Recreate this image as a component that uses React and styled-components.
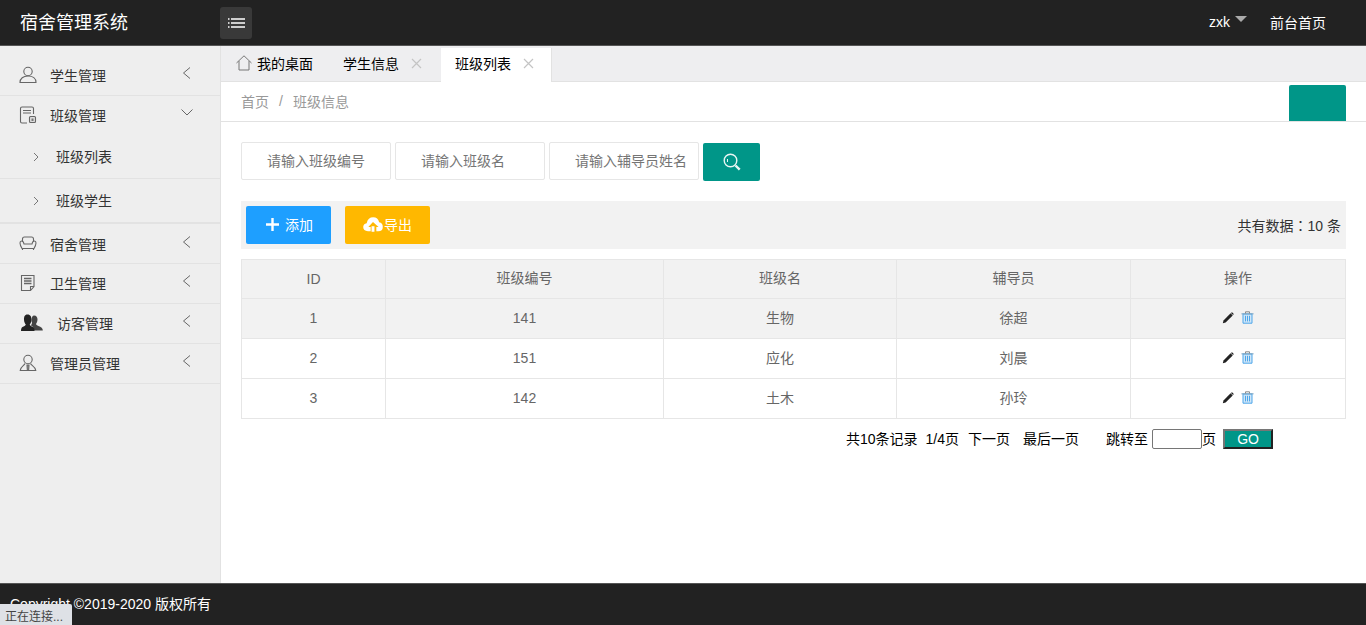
import React from "react";
import styled, { createGlobalStyle } from "styled-components";

const GlobalStyle = createGlobalStyle`
  html, body {
    margin: 0;
    padding: 0;
    height: 100%;
    overflow: hidden;
    font-family: "Liberation Sans", "Noto Sans CJK SC", sans-serif;
    font-size: 14px;
    color: #333;
  }
  * {
    box-sizing: border-box;
  }
`;

const Page = styled.div`
  position: relative;
  display: flex;
  flex-direction: column;
  height: 625px;
  width: 1366px;
  overflow: hidden;
`;

const Header = styled.header`
  flex: 0 0 46px;
  display: flex;
  align-items: center;
  background: #222;
  border-bottom: 1px solid #555;
  color: #fff;
`;

const Logo = styled.div`
  width: 220px;
  padding: 0 0 3px 20px;
  font-size: 18px;
`;

const MenuToggle = styled.button`
  width: 32px;
  height: 32px;
  margin-top: 1px;
  padding: 0;
  border: 0;
  border-radius: 3px;
  background: #393939;
  display: flex;
  align-items: center;
  justify-content: center;
`;

const HeaderRight = styled.div`
  margin-left: auto;
  display: flex;
  align-items: center;
  padding: 0 40px 2px 0;
  font-size: 14px;
`;

const UserName = styled.span`
  margin-right: 5px;
`;

const Caret = styled.span`
  width: 0;
  height: 0;
  margin: 0 23px 5px 0;
  border-style: solid;
  border-width: 6px 6px 0;
  border-color: #aaa transparent transparent;
`;

const Body = styled.div`
  flex: 1;
  display: flex;
  min-height: 0;
`;

const Sidebar = styled.aside`
  flex: 0 0 221px;
  background: #eee;
  border-right: 1px solid #e2e2e2;
`;

const NavRow = styled.div`
  display: flex;
  align-items: center;
  height: ${(p) => p.$h}px;
  padding: ${(p) => p.$pt || 0}px 0 ${(p) => p.$pb || 0}px ${(p) => (p.$sub ? 28 : 19)}px;
  border-bottom: ${(p) => (p.$line === "none" ? "0" : `${p.$line || 1}px solid #e2e2e2`)};
  color: #333;
  font-size: 14px;
`;

const NavIcon = styled.span`
  width: ${(p) => p.$w || 31}px;
  height: 18px;
  display: flex;
  align-items: center;
  margin-top: -2px;
`;

const NavLabel = styled.span`
  flex: 1;
  line-height: 20px;
`;

const NavArrow = styled.span`
  width: 16px;
  height: 16px;
  margin: -6px 25px 0 0;
  display: flex;
`;

const SubArrow = styled.span`
  width: 28px;
  display: flex;
`;

const Main = styled.main`
  flex: 1;
  min-width: 0;
  background: #fff;
  display: flex;
  flex-direction: column;
`;

const TabBar = styled.div`
  flex: 0 0 36px;
  display: flex;
  align-items: flex-end;
  background: #eeeef0;
  border-bottom: 1px solid #e2e2e2;
`;

const Tab = styled.div`
  height: 34px;
  margin-bottom: -1px;
  display: flex;
  align-items: center;
  padding: 0 ${(p) => p.$pr}px 4px ${(p) => p.$pl}px;
  width: ${(p) => p.$w}px;
  color: #000;
  font-size: 14px;
  background: ${(p) => (p.$active ? "#fff" : "transparent")};
  border-right: ${(p) => (p.$active ? "1px solid #e2e2e2" : "0")};
`;

const TabText = styled.span`
  flex: 1;
  white-space: nowrap;
`;

const HomeIcon = styled.span`
  display: flex;
  margin: -1px 5px 0 0;
`;

const Crumbs = styled.div`
  flex: 0 0 40px;
  display: flex;
  align-items: center;
  padding: 0 0 2px 20px;
  border-bottom: 1px solid #e2e2e2;
  color: #999;
  font-size: 14px;
`;

const CrumbSep = styled.span`
  margin: 0 10px;
`;

const RefreshButton = styled.div`
  align-self: flex-end;
  width: 57px;
  height: 36px;
  margin: 0 20px -2px auto;
  background: #009688;
  border-radius: 2px 2px 0 0;
`;

const Content = styled.div`
  flex: 1;
  padding: 20px 20px 0;
`;

const SearchRow = styled.div`
  display: flex;
  gap: 4px;
  height: 39px;
  margin-bottom: 20px;
`;

const SearchInput = styled.input`
  width: 150px;
  height: 38px;
  padding: 0 10px 0 25px;
  border: 1px solid #e6e6e6;
  border-radius: 2px;
  background: #fff;
  font: 14px "Liberation Sans", "Noto Sans CJK SC", sans-serif;
  &::placeholder {
    color: #757575;
    opacity: 1;
  }
`;

const SearchButton = styled.button`
  width: 57px;
  height: 38px;
  margin-top: 1px;
  padding: 0;
  border: 0;
  border-radius: 2px;
  background: #009688;
  display: flex;
  align-items: center;
  justify-content: center;
`;

const Toolbar = styled.div`
  height: 48px;
  padding: 0 5px;
  display: flex;
  align-items: center;
  background: #f2f2f2;
  margin-bottom: 10px;
`;

const ActionButton = styled.button`
  width: 85px;
  height: 38px;
  margin-right: 14px;
  padding: 0 0 2px ${(p) => p.$pl || 0}px;
  border: 0;
  border-radius: 2px;
  color: #fff;
  background: ${(p) => p.$bg};
  font: 14px "Liberation Sans", "Noto Sans CJK SC", sans-serif;
  display: flex;
  align-items: center;
  justify-content: center;
  gap: ${(p) => p.$gap}px;
`;

const Total = styled.span`
  margin-left: auto;
  color: #333;
  font-size: 14px;
`;

const CenteredColon = styled.span`
  font-family: "Noto Sans CJK TC", sans-serif;
`;

const Table = styled.table`
  width: 1104px;
  border-collapse: collapse;
  table-layout: fixed;
  color: #666;
  font-size: 14px;
`;

const Th = styled.th`
  height: 39px;
  padding: 0 0 ${(p) => (p.$cjk ? 4 : 0)}px;
  border: 1px solid #e6e6e6;
  background: #f2f2f2;
  font-weight: 400;
  width: ${(p) => p.$w}px;
`;

const Td = styled.td`
  height: 40px;
  padding: 0 0 ${(p) => (p.$cjk ? 4 : 2)}px;
  border: 1px solid #e6e6e6;
  text-align: center;
`;

const Tr = styled.tr`
  background: ${(p) => (p.$shade ? "#f2f2f2" : "#fff")};
`;

const RowActions = styled.div`
  display: flex;
  justify-content: center;
  align-items: center;
  gap: 7px;
`;

const Pager = styled.div`
  display: flex;
  align-items: center;
  height: 20px;
  margin: 10px 0 0 605px;
  color: #000;
  font-size: 14px;
  white-space: nowrap;
`;

const PagerItem = styled.span`
  margin: -2px ${(p) => p.$mr || 0}px 0 0;
`;

const PagerInput = styled.input`
  width: 50px;
  height: 20px;
  margin: 0 0 0 4px;
  padding: 0;
  border: 1px solid #767676;
  border-radius: 2px;
  background: #fff;
`;

const GoButton = styled.button`
  width: 50px;
  height: 20px;
  margin-left: 7px;
  padding: 0;
  border-style: solid;
  border-width: 2px;
  border-color: #767676 #222 #222 #767676;
  background: #009688;
  color: #fff;
  font: 14px "Liberation Sans", sans-serif;
`;

const Footer = styled.footer`
  flex: 0 0 42px;
  background: #222;
  border-top: 1px solid #555;
  color: #fff;
  font-size: 14px;
  padding: 9px 0 0 10px;
`;

const StatusTip = styled.div`
  position: absolute;
  left: 0;
  bottom: 0;
  width: 72px;
  height: 21px;
  padding: 3px 0 0 5px;
  background: #dee1e6;
  border-top-right-radius: 2px;
  color: #444;
  font-size: 12px;
  white-space: nowrap;
`;

const Chevron = ({ dir = "left", color = "#666" }) => {
  const d = { left: "M11 2.500 4.500 8l6.500 5.500", down: "M2.500 4.500 8 10l5.500-5.500", right: "M6 4l4 4-4 4" }[dir];
  return (
    <svg width="16" height="16" viewBox="0 0 16 16" fill="none" stroke={color} strokeWidth="1">
      <path d={d} />
    </svg>
  );
};

const iconProps = { width: 18, height: 18, viewBox: "0 0 18 18", fill: "none", stroke: "#666", strokeWidth: 1.1 };

const UserIcon = () => (
  <svg {...iconProps}>
    <circle cx="9" cy="5.500" r="4.200" />
    <path d="M1 16.500c0-4 3.200-6.500 8-6.500s8 2.500 8 6.500z" />
  </svg>
);

const ClassIcon = () => (
  <svg {...iconProps}>
    <path d="M14.500 8V2.500q0-1.500-1.500-1.500H3q-1.500 0-1.500 1.500v13q0 1.500 1.500 1.500h5M4 4.500h8M4 7h8" />
    <rect x="10.500" y="10.500" width="6" height="6" rx="1" fill="#ddd" />
    <rect x="12.500" y="12.500" width="2" height="2.500" fill="#777" stroke="none" />
  </svg>
);

const SofaIcon = () => (
  <svg {...iconProps}>
    <path d="M3.500 7V4q0-2 2-2h7q2 0 2 2v3M3.500 13.500V15M14.500 13.500V15" />
    <path d="M1 8q0-2 1.500-2 2 0 2.500 3h8q.5-3 2.500-3Q17 6 17 8q0 2-2 5.500H3Q1 10 1 8z" />
  </svg>
);

const NoteIcon = () => (
  <svg {...iconProps}>
    <path d="M2.500 1.500h12.500v11l-3.500 4h-9zM15 12.500h-3.500v4" />
    <path d="M5 4.500h7.500M5 7h7.500M5 9.500h7.500" strokeWidth="1.400" />
  </svg>
);

const VisitorsIcon = () => (
  <svg width="24" height="18" viewBox="-2 0 24 18" fill="#222">
    <path d="M13 1.500c2.500 0 3.500 2 3.500 4s-1 3.500-1.500 4.500c.3 1 1.500 1.500 3 2.200s3.800 1.500 3.800 4.300H13c0-2.500-1-4-3-5 .5-1.500 1.500-2 .8-3.500-.5-1.500-.3-6.500 2.200-6.500z" fill="#444" />
    <path d="M6.500.5C9.500.5 10.500 3 10.500 5.500s-1 4-1.800 5c.3 1.200 1.800 1.800 3.300 2.500 1 .5 1.500 2 1.500 4H0c0-2 .5-3.500 1.500-4 1.500-.7 3-1.300 3.300-2.500-.8-1-1.800-2.500-1.800-5S3.500.5 6.500.5z" />
  </svg>
);

const AdminIcon = () => (
  <svg {...iconProps}>
    <circle cx="9" cy="5.500" r="4.200" />
    <path d="M6 9.500c-.5 2-4.500 3-4.800 7h15.600c-.3-4-4.800-5-5.300-7" />
    <path d="M8 11h2l-.4 5.500H8.400z" fill="#999" />
  </svg>
);

const HamburgerIcon = () => (
  <svg width="17" height="10" viewBox="0 0 17 10" fill="none" stroke="#fff" strokeWidth="1.400">
    <path d="M3 1h14M3 5h14M3 9h14M0 1h1.500M0 5h1.500M0 9h1.500" />
  </svg>
);

const HomeGlyph = () => (
  <svg width="16" height="16" viewBox="0 0 16 16" fill="none" stroke="#777" strokeWidth="1">
    <path d="M.5 8 8 .8 15.500 8M3 6v9h10V6" />
  </svg>
);

const CloseGlyph = () => (
  <svg width="11" height="11" viewBox="0 0 11 11" fill="none" stroke="#c4c4c4" strokeWidth="1.200">
    <path d="M1 1l9 9M10 1l-9 9" />
  </svg>
);

const SearchGlyph = () => (
  <svg width="18" height="18" viewBox="0 0 18 18" fill="none" stroke="#e8f6f4" strokeWidth="1.400">
    <circle cx="7.500" cy="7.500" r="6.300" />
    <path d="M12.500 12.500l4.200 4.200" strokeWidth="2.400" />
    <path d="M4.500 6v3" strokeWidth="1" />
  </svg>
);

const PlusGlyph = () => (
  <svg width="13" height="13" viewBox="0 0 13 13" fill="none" stroke="#fff" strokeWidth="2.400">
    <path d="M6.500 0v13M0 6.500h13" />
  </svg>
);

const CloudGlyph = () => (
  <svg width="20" height="16" viewBox="0 0 18 14" fill="#fff">
    <path d="M4.500 13.500Q.2 13.500.2 9.800q0-3 3.100-3.500Q4.500 1 9.200 1q4.300 0 5.300 4.400 3.300.5 3.300 4.200 0 3.900-4.100 3.900h-1.700V9.800h2L9 5.300 4.800 9.800h2.100v3.700z" />
    <rect x="7.700" y="9" width="2.600" height="5" />
  </svg>
);

const PencilGlyph = () => (
  <svg width="12" height="12" viewBox="0 0 12 12">
    <path d="M.8 11.200l.7-2.800L8.600 1.300l2.100 2.100-7.100 7.100z" fill="#222" />
    <path d="M9.300.6q.6-.4 1.100 0l1 1q.4.600 0 1.100l-.3.300L9 .9z" fill="#222" />
  </svg>
);

const TrashGlyph = () => (
  <svg width="13" height="13" viewBox="0 0 13 13" fill="none" stroke="#4da6ea" strokeWidth="1">
    <path d="M2 3v9.200h9V3z" fill="#cfe6f8" />
    <path d="M4.500 4.800v5.600M6.500 4.800v5.600M8.500 4.800v5.600" />
    <path d="M.5 2.800h12" stroke="#7fa9c9" strokeWidth="1.200" />
    <path d="M4.500 2.500V.8h4v1.700" stroke="#8a8a8a" />
  </svg>
);

const navTop = [
  { label: "学生管理", icon: <UserIcon />, h: 50, pt: 11 },
  { label: "班级管理", icon: <ClassIcon />, h: 40, dir: "down", line: "none", pb: 1 },
];

const navBottom = [
  { label: "宿舍管理", icon: <SofaIcon />, h: 40, pt: 2 },
  { label: "卫生管理", icon: <NoteIcon />, h: 40 },
  { label: "访客管理", icon: <VisitorsIcon />, h: 40, w: 38 },
  { label: "管理员管理", icon: <AdminIcon />, h: 40 },
];

const rows = [
  { id: 1, code: 141, name: "生物", teacher: "徐超" },
  { id: 2, code: 151, name: "应化", teacher: "刘晨" },
  { id: 3, code: 142, name: "土木", teacher: "孙玲" },
];

const NavItem = ({ item }) => (
  <NavRow $h={item.h} $pt={item.pt} $pb={item.pb} $line={item.line}>
    <NavIcon $w={item.w}>{item.icon}</NavIcon>
    <NavLabel>{item.label}</NavLabel>
    <NavArrow>
      <Chevron dir={item.dir || "left"} />
    </NavArrow>
  </NavRow>
);

export default function App() {
  return (
    <Page>
      <GlobalStyle />
      <Header>
        <Logo>宿舍管理系统</Logo>
        <MenuToggle aria-label="menu">
          <HamburgerIcon />
        </MenuToggle>
        <HeaderRight>
          <UserName>zxk</UserName>
          <Caret />
          <span>前台首页</span>
        </HeaderRight>
      </Header>
      <Body>
        <Sidebar>
          {navTop.map((item) => (
            <NavItem key={item.label} item={item} />
          ))}
          <NavRow $sub $h={43}>
            <SubArrow>
              <Chevron dir="right" color="#777" />
            </SubArrow>
            <NavLabel>班级列表</NavLabel>
          </NavRow>
          <NavRow $sub $h={45} $line={2} $pt={1}>
            <SubArrow>
              <Chevron dir="right" color="#777" />
            </SubArrow>
            <NavLabel>班级学生</NavLabel>
          </NavRow>
          {navBottom.map((item) => (
            <NavItem key={item.label} item={item} />
          ))}
        </Sidebar>
        <Main>
          <TabBar>
            <Tab $w={108} $pl={15} $pr={15}>
              <HomeIcon>
                <HomeGlyph />
              </HomeIcon>
              <TabText>我的桌面</TabText>
            </Tab>
            <Tab $w={112} $pl={14} $pr={19}>
              <TabText>学生信息</TabText>
              <CloseGlyph />
            </Tab>
            <Tab $active $w={111} $pl={14} $pr={17}>
              <TabText>班级列表</TabText>
              <CloseGlyph />
            </Tab>
          </TabBar>
          <Crumbs>
            <span>首页</span>
            <CrumbSep>/</CrumbSep>
            <span>班级信息</span>
            <RefreshButton />
          </Crumbs>
          <Content>
            <SearchRow>
              <SearchInput placeholder="请输入班级编号" />
              <SearchInput placeholder="请输入班级名" />
              <SearchInput placeholder="请输入辅导员姓名" />
              <SearchButton aria-label="search">
                <SearchGlyph />
              </SearchButton>
            </SearchRow>
            <Toolbar>
              <ActionButton $bg="#1e9fff" $gap={6} $pl={2}>
                <PlusGlyph />
                添加
              </ActionButton>
              <ActionButton $bg="#ffb800" $gap={1}>
                <CloudGlyph />
                导出
              </ActionButton>
              <Total>共有数据<CenteredColon>：</CenteredColon>10 条</Total>
            </Toolbar>
            <Table>
              <thead>
                <tr>
                  <Th $w={144}>ID</Th>
                  <Th $cjk $w={278}>班级编号</Th>
                  <Th $cjk $w={233}>班级名</Th>
                  <Th $cjk $w={234}>辅导员</Th>
                  <Th $cjk $w={215}>操作</Th>
                </tr>
              </thead>
              <tbody>
                {rows.map((row, i) => (
                  <Tr key={row.id} $shade={i === 0}>
                    <Td>{row.id}</Td>
                    <Td>{row.code}</Td>
                    <Td $cjk>{row.name}</Td>
                    <Td $cjk>{row.teacher}</Td>
                    <Td>
                      <RowActions>
                        <PencilGlyph />
                        <TrashGlyph />
                      </RowActions>
                    </Td>
                  </Tr>
                ))}
              </tbody>
            </Table>
            <Pager>
              <PagerItem $mr={8}>共10条记录</PagerItem>
              <PagerItem $mr={9}>1/4页</PagerItem>
              <PagerItem $mr={13}>下一页</PagerItem>
              <PagerItem $mr={27}>最后一页</PagerItem>
              <PagerItem>跳转至</PagerItem>
              <PagerInput />
              <PagerItem>页</PagerItem>
              <GoButton>GO</GoButton>
            </Pager>
          </Content>
        </Main>
      </Body>
      <Footer>Copyright ©2019-2020 版权所有</Footer>
      <StatusTip>正在连接...</StatusTip>
    </Page>
  );
}
